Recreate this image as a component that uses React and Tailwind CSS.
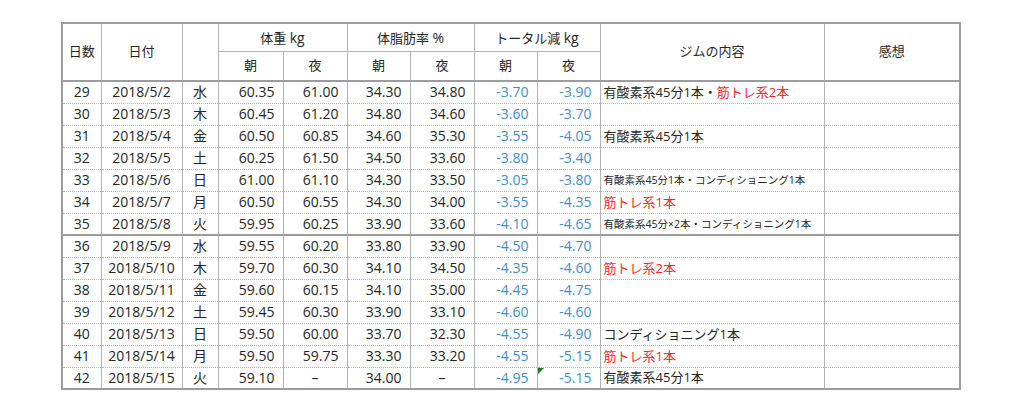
import React from 'react';

const rows = [
  { n: 29, d: '2018/5/2', w: '水', am: '60.35', pm: '61.00', fa: '34.30', fp: '34.80', ta: '-3.70', tp: '-3.90', gym: [['有酸素系45分1本・', 'k'], ['筋トレ系2本', 'r']] },
  { n: 30, d: '2018/5/3', w: '木', am: '60.45', pm: '61.20', fa: '34.80', fp: '34.60', ta: '-3.60', tp: '-3.70' },
  { n: 31, d: '2018/5/4', w: '金', am: '60.50', pm: '60.85', fa: '34.60', fp: '35.30', ta: '-3.55', tp: '-4.05', gym: [['有酸素系45分1本', 'k']] },
  { n: 32, d: '2018/5/5', w: '土', am: '60.25', pm: '61.50', fa: '34.50', fp: '33.60', ta: '-3.80', tp: '-3.40' },
  { n: 33, d: '2018/5/6', w: '日', am: '61.00', pm: '61.10', fa: '34.30', fp: '33.50', ta: '-3.05', tp: '-3.80', gym: [['有酸素系45分1本・コンディショニング1本', 'k']], small: true },
  { n: 34, d: '2018/5/7', w: '月', am: '60.50', pm: '60.55', fa: '34.30', fp: '34.00', ta: '-3.55', tp: '-4.35', gym: [['筋トレ系1本', 'r']] },
  { n: 35, d: '2018/5/8', w: '火', am: '59.95', pm: '60.25', fa: '33.90', fp: '33.60', ta: '-4.10', tp: '-4.65', gym: [['有酸素系45分×2本・コンディショニング1本', 'k']], small: true, sep: true },
  { n: 36, d: '2018/5/9', w: '水', am: '59.55', pm: '60.20', fa: '33.80', fp: '33.90', ta: '-4.50', tp: '-4.70' },
  { n: 37, d: '2018/5/10', w: '木', am: '59.70', pm: '60.30', fa: '34.10', fp: '34.50', ta: '-4.35', tp: '-4.60', gym: [['筋トレ系2本', 'r']] },
  { n: 38, d: '2018/5/11', w: '金', am: '59.60', pm: '60.15', fa: '34.10', fp: '35.00', ta: '-4.45', tp: '-4.75' },
  { n: 39, d: '2018/5/12', w: '土', am: '59.45', pm: '60.30', fa: '33.90', fp: '33.10', ta: '-4.60', tp: '-4.60' },
  { n: 40, d: '2018/5/13', w: '日', am: '59.50', pm: '60.00', fa: '33.70', fp: '32.30', ta: '-4.55', tp: '-4.90', gym: [['コンディショニング1本', 'k']] },
  { n: 41, d: '2018/5/14', w: '月', am: '59.50', pm: '59.75', fa: '33.30', fp: '33.20', ta: '-4.55', tp: '-5.15', gym: [['筋トレ系1本', 'r']] },
  { n: 42, d: '2018/5/15', w: '火', am: '59.10', pm: '–', fa: '34.00', fp: '–', ta: '-4.95', tp: '-5.15', gym: [['有酸素系45分1本', 'k']], mark: true },
];

const widths = [39, 81, 36, 65, 64, 63, 64, 63, 63, 224, 136];

export default function App() {
  const th = 'border border-[#b4b4b4] font-normal text-center text-[13px]';
  const base = 'border-x border-x-[#b4b4b4] p-0 h-[22px] leading-none';
  const td = `${base} text-[14px]`;
  const num = (v) => (v === '–' ? 'text-center' : 'text-right pr-[8px]');

  return (
    <div className="w-[1024px] h-[417px] bg-white pt-[22px] pl-[61px] text-[#262626]"
      style={{ fontFamily: '"Open Sans", "Noto Sans CJK JP", sans-serif' }}>
      <table className="table-fixed border-collapse border-2 border-[#9c9c9c] w-[900px]">
        <colgroup>
          {widths.map((w, i) => <col key={i} style={{ width: w }} />)}
        </colgroup>
        <thead>
          <tr className="h-[28px]">
            <th rowSpan={2} className={th}>日数</th>
            <th rowSpan={2} className={th}>日付</th>
            <th rowSpan={2} className={th}></th>
            <th colSpan={2} className={th}>体重 <span className="text-[14px]">kg</span></th>
            <th colSpan={2} className={th}>体脂肪率 <span className="text-[14px]">%</span></th>
            <th colSpan={2} className={th}>トータル減 <span className="text-[14px]">kg</span></th>
            <th rowSpan={2} className={th}>ジムの内容</th>
            <th rowSpan={2} className={th}>感想</th>
          </tr>
          <tr className="h-[30px] border-b-2 border-b-[#9c9c9c]">
            {['朝', '夜', '朝', '夜', '朝', '夜'].map((t, i) => (
              <th key={i} className={th}>{t}</th>
            ))}
          </tr>
        </thead>
        <tbody>
          {rows.map((r) => (
            <tr key={r.n}
              className={r.sep ? 'border-b-2 border-b-[#9c9c9c]' : 'border-b border-dotted border-b-[#b8b8b8]'}>
              <td className={`${td} text-center`}>{r.n}</td>
              <td className={`${td} text-center`}>{r.d}</td>
              <td className={`${td} text-center`}>{r.w}</td>
              <td className={`${td} ${num(r.am)}`}>{r.am}</td>
              <td className={`${td} ${num(r.pm)}`}>{r.pm}</td>
              <td className={`${td} ${num(r.fa)}`}>{r.fa}</td>
              <td className={`${td} ${num(r.fp)}`}>{r.fp}</td>
              <td className={`${td} ${num(r.ta)} text-[#3b8ed6]`}>{r.ta}</td>
              <td className={`${td} ${num(r.tp)} text-[#3b8ed6] relative`}>
                {r.mark && (
                  <span className="absolute left-0 top-0 w-0 h-0 border-t-[6px] border-t-[#1f7a1f] border-r-[6px] border-r-transparent" />
                )}
                {r.tp}
              </td>
              <td className={`${base} pl-[3px] whitespace-nowrap ${r.small ? 'text-[10.5px]' : 'text-[13px]'}`}>
                {r.gym && r.gym.map(([t, c], i) => (
                  <span key={i} className={c === 'r' ? 'text-[#ff2424]' : ''}>{t}</span>
                ))}
              </td>
              <td className={td}></td>
            </tr>
          ))}
        </tbody>
      </table>
    </div>
  );
}
